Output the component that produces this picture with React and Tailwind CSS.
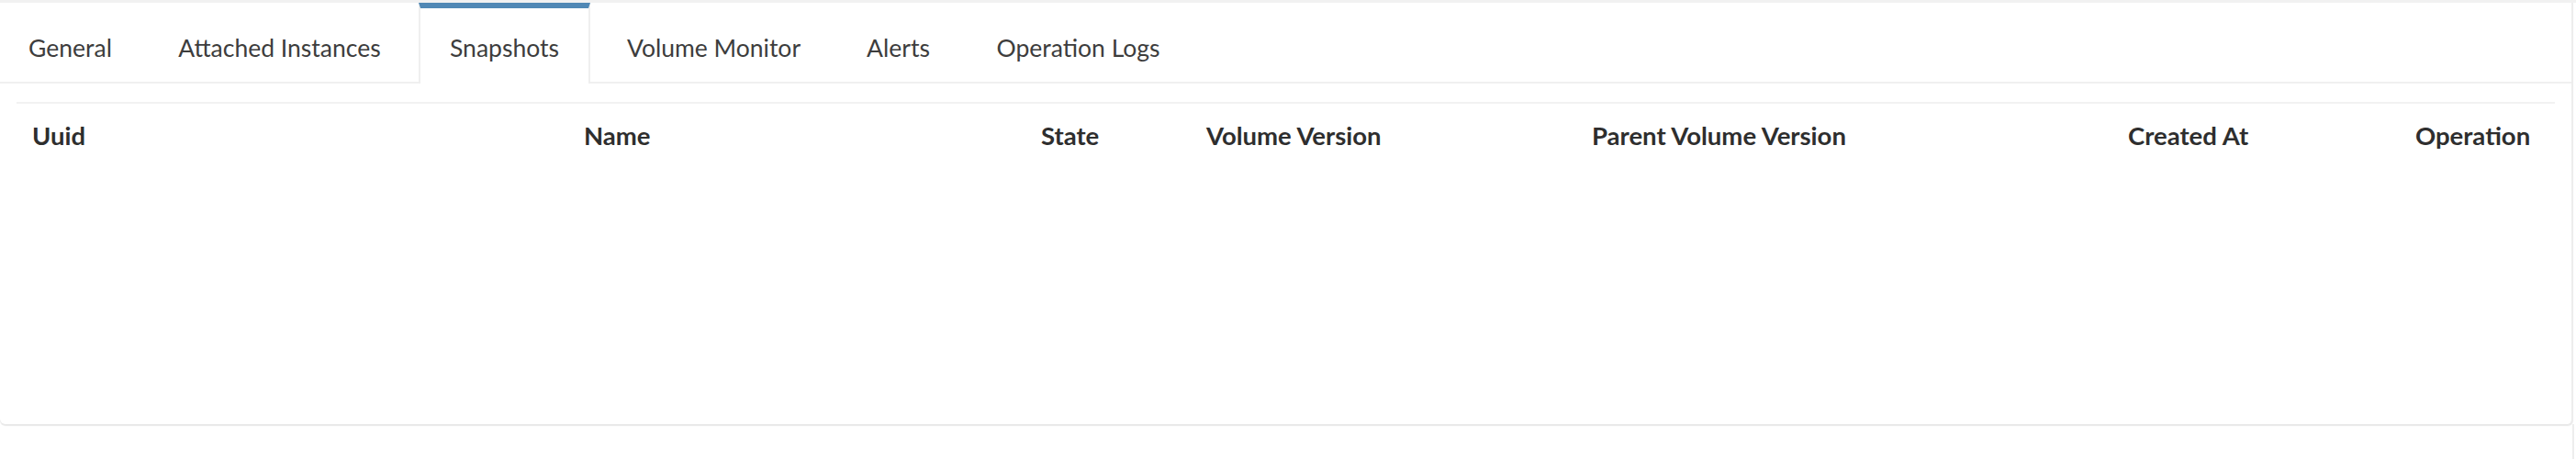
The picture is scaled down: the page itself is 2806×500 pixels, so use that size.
export default function App() {
  const cols = [
    { label: "Uuid", w: "w-[601px]" },
    { label: "Name", w: "w-[498px]" },
    { label: "State", w: "w-[180px]" },
    { label: "Volume Version", w: "w-[420px]" },
    { label: "Parent Volume Version", w: "w-[584px]" },
    { label: "Created At", w: "w-[313px]" },
    { label: "Operation", w: "w-[169px]" },
  ];
  return (
    <div
      className="w-[2806px] h-[500px] bg-white overflow-hidden"
      style={{ fontFamily: "Lato, 'Noto Sans', sans-serif" }}
    >
      <div className="h-[3px] bg-[#f1f1f1]" />
      <div className="w-[2803px] h-[459px] bg-white border-r-2 border-[#ededed] rounded-b-[6px] shadow-[0_2px_1px_rgba(0,0,0,0.09)]">
        <div className="flex h-[88px] border-b-2 border-[#f0f0f0] gap-[9px]">
          <div className="w-[153px] pt-[32px] text-center text-[26.5px] leading-[34px] text-[#3d3d3d]">General</div>
          <div className="w-[285px] pt-[32px] text-center text-[26.5px] leading-[34px] text-[#3d3d3d]">Attached Instances</div>
          <div className="w-[187px] h-[88px] bg-white border-t-[6px] border-t-[#5088b5] border-x-2 border-x-[#efefef] pt-[26px] text-center text-[26.5px] leading-[34px] text-[#3d3d3d]">Snapshots</div>
          <div className="w-[251px] pt-[32px] text-center text-[26.5px] leading-[34px] text-[#3d3d3d]">Volume Monitor</div>
          <div className="w-[133px] pt-[32px] text-center text-[26.5px] leading-[34px] text-[#3d3d3d]">Alerts</div>
          <div className="w-[241px] pt-[32px] text-center text-[26.5px] leading-[34px] text-[#3d3d3d]">Operation Logs</div>
        </div>
        <div className="mt-[20px] ml-[18px] w-[2765px] border-t-2 border-[#f2f2f2]">
          <div className="flex">
            {cols.map((c) => (
              <div
                key={c.label}
                className={`${c.w} px-[17px] pt-[19px] pb-[18px] text-[27.5px] leading-[32px] font-bold text-[#2e2e2e] whitespace-nowrap`}
              >
                {c.label}
              </div>
            ))}
          </div>
        </div>
      </div>
      <div className="w-[2804px] h-[38px] border-r-2 border-[#ededed]" />
    </div>
  );
}
